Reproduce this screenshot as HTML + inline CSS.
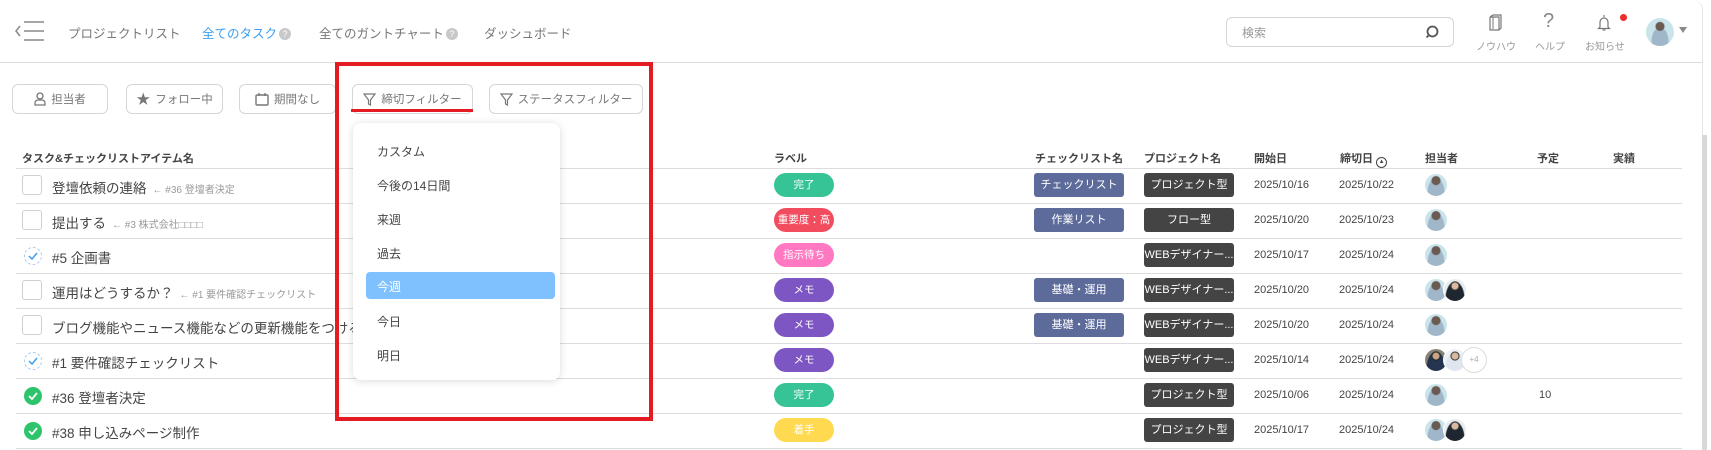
<!DOCTYPE html>
<html><head><meta charset="utf-8">
<style>
*{box-sizing:border-box;margin:0;padding:0}
body{width:1711px;height:450px;overflow:hidden;background:#fff;font-family:"Liberation Sans","Noto Sans CJK JP",sans-serif;color:#333;position:relative}
.a{position:absolute}
.panel{position:absolute;left:0;top:0;width:1703px;height:450px;border-right:1px solid #e4e4e4;border-top-right-radius:10px}
.nav{font-size:12.5px;color:#777;top:23px}
.q{display:inline-block;width:12px;height:12px;border-radius:50%;background:#c8c8c8;color:#fff;font-size:9px;text-align:center;line-height:12px;vertical-align:1px;margin-left:2px}
.btn{position:absolute;top:84px;height:30px;border:1px solid #d6d6d6;border-radius:6px;font-size:11.5px;color:#777;display:flex;align-items:center;justify-content:center;gap:5px}
.th{position:absolute;top:150px;font-size:11px;font-weight:bold;color:#444}
.line{position:absolute;left:16px;width:1666px;height:1px;background:#dcdcdc}
.cb{position:absolute;left:22px;width:20px;height:20px;border:1px solid #cfcfcf;border-radius:3px;background:#fff}
.dc{position:absolute;left:24px;width:18px;height:18px;border:1px dashed #a9cdf0;border-radius:50%}
.gc{position:absolute;left:24px;width:18px;height:18px;background:#2ec46c;border-radius:50%}
.t{position:absolute;left:52px;font-size:13.5px;color:#444;white-space:nowrap}
.t small{font-size:10px;color:#999;margin-left:6px}
.pill{position:absolute;left:774px;width:60px;height:24px;border-radius:12px;color:#fff;font-size:10.5px;text-align:center;line-height:24px}
.ck{position:absolute;left:1034px;width:90px;height:24px;border-radius:3px;background:#5d6b9b;color:#fff;font-size:11px;text-align:center;line-height:24px}
.pj{position:absolute;left:1144px;width:90px;height:24px;border-radius:3px;background:#444;color:#fff;font-size:11px;text-align:center;line-height:24px;white-space:nowrap;overflow:hidden}
.d{position:absolute;font-size:11px;color:#444}
.av{position:absolute;width:24px;height:24px;border-radius:50%;background:radial-gradient(circle at 50% 30%,#6b5a52 0 4px,transparent 5px),radial-gradient(ellipse at 50% 85%,#9fb7c8 0 8px,transparent 9px),#c9e4ea;border:1px solid #fff}
.av2{background:radial-gradient(circle at 50% 32%,#d9b9a0 0 3px,#333 4px,transparent 5px),radial-gradient(ellipse at 50% 90%,#1f2630 0 9px,transparent 10px),#e8eef0}
.dd{position:absolute;left:353px;top:123px;width:207px;height:257px;background:#fff;border-radius:8px;box-shadow:0 1px 8px rgba(0,0,0,.15)}
.di{position:absolute;left:24px;font-size:12px;color:#444}
</style></head><body>
<div class="panel"></div>
<svg class="a" style="left:14px;top:20px" width="34" height="22" viewBox="0 0 34 22"><path d="M6 6 L2 11 L6 16" fill="none" stroke="#888" stroke-width="1.5"/><path d="M10 2H30M10 11H30M10 20H30" stroke="#888" stroke-width="1.6"/></svg>
<div class="a nav" style="left:68px">プロジェクトリスト</div>
<div class="a nav" style="left:202px;color:#3d9ef0">全てのタスク<span class="q">?</span></div>
<div class="a nav" style="left:319px">全てのガントチャート<span class="q">?</span></div>
<div class="a nav" style="left:484px">ダッシュボード</div>
<div class="a" style="left:0;top:62px;width:1702px;height:1px;background:#ddd"></div>
<div class="a" style="left:1226px;top:17px;width:228px;height:30px;border:1px solid #d6d6d6;border-radius:6px"></div>
<div class="a" style="left:1242px;top:24px;font-size:12px;color:#999">検索</div>
<svg class="a" style="left:1424px;top:24px" width="16" height="16" viewBox="0 0 16 16"><circle cx="8.5" cy="7.5" r="5" fill="none" stroke="#555" stroke-width="1.8"/><path d="M5 11 L2.5 13.5" stroke="#555" stroke-width="1.8"/></svg>
<svg class="a" style="left:1487px;top:14px" width="16" height="18" viewBox="0 0 16 18"><path d="M3 3V16H12V3H3M3 3L6 1H14V14L12 16" fill="none" stroke="#777" stroke-width="1.2"/><path d="M6 3V15" stroke="#777" stroke-width="1"/></svg>
<div class="a" style="left:1476px;top:38px;font-size:10px;color:#999">ノウハウ</div>
<div class="a" style="left:1543px;top:10px;font-size:20px;color:#888">?</div>
<div class="a" style="left:1535px;top:38px;font-size:10px;color:#999">ヘルプ</div>
<svg class="a" style="left:1596px;top:14px" width="16" height="18" viewBox="0 0 16 18"><path d="M8 1V3M4 13V8A4 4 0 0 1 12 8V13L13.5 14.5H2.5Z" fill="none" stroke="#777" stroke-width="1.2"/><path d="M6.5 16H9.5" stroke="#777" stroke-width="1.2"/></svg>
<div class="a" style="left:1620px;top:14px;width:7px;height:7px;border-radius:50%;background:#f02a2a"></div>
<div class="a" style="left:1585px;top:38px;font-size:10px;color:#999">お知らせ</div>
<div class="av" style="left:1645px;top:17px;width:30px;height:30px"></div>
<div class="a" style="left:1679px;top:27px;width:0;height:0;border-left:4px solid transparent;border-right:4px solid transparent;border-top:6px solid #888"></div>
<div class="btn" style="left:12px;width:96px"><svg width="12" height="14" viewBox="0 0 12 14"><circle cx="6" cy="4" r="3" fill="none" stroke="#777" stroke-width="1.3"/><path d="M1 13V11A3 3 0 0 1 4 8H8A3 3 0 0 1 11 11V13Z" fill="none" stroke="#777" stroke-width="1.3"/></svg>担当者</div>
<div class="btn" style="left:126px;width:97px"><span style="font-size:14px;color:#777">★</span>フォロー中</div>
<div class="btn" style="left:239px;width:97px"><svg width="14" height="14" viewBox="0 0 14 14"><rect x="1" y="3" width="12" height="10" rx="1" fill="none" stroke="#777" stroke-width="1.4"/><path d="M4 1V4M10 1V4" stroke="#777" stroke-width="1.4"/></svg>期間なし</div>
<div class="btn" style="left:352px;width:121px"><svg width="13" height="13" viewBox="0 0 13 13"><path d="M1 1H12L7.5 7V12L5.5 11V7Z" fill="none" stroke="#777" stroke-width="1.2"/></svg>締切フィルター</div>
<div class="btn" style="left:489px;width:154px"><svg width="13" height="13" viewBox="0 0 13 13"><path d="M1 1H12L7.5 7V12L5.5 11V7Z" fill="none" stroke="#777" stroke-width="1.2"/></svg>ステータスフィルター</div>
<div class="a" style="left:351px;top:109px;width:122px;height:3px;background:#e31c23"></div>
<div class="th" style="left:22px">タスク&amp;チェックリストアイテム名</div>
<div class="th" style="left:774px">ラベル</div>
<div class="th" style="left:1035px">チェックリスト名</div>
<div class="th" style="left:1144px">プロジェクト名</div>
<div class="th" style="left:1254px">開始日</div>
<div class="th" style="left:1340px">締切日 <span style="display:inline-block;width:11px;height:11px;border:1px solid #444;border-radius:50%;font-size:6px;text-align:center;line-height:9px;vertical-align:-1px">▲</span></div>
<div class="th" style="left:1425px">担当者</div>
<div class="th" style="left:1537px">予定</div>
<div class="th" style="left:1613px">実績</div>
<div class="line" style="top:168px"></div>
<div class="line" style="top:203px"></div>
<div class="line" style="top:238px"></div>
<div class="line" style="top:273px"></div>
<div class="line" style="top:308px"></div>
<div class="line" style="top:343px"></div>
<div class="line" style="top:378px"></div>
<div class="line" style="top:413px"></div>
<div class="line" style="top:448px"></div>
<div class="cb" style="top:175px"></div><div class="t" style="top:177px">登壇依頼の連絡<small>← #36 登壇者決定</small></div>
<div class="cb" style="top:210px"></div><div class="t" style="top:212px">提出する<small>← #3 株式会社□□□□</small></div>
<div class="dc" style="top:247px"><svg class="a" style="left:3px;top:4px" width="10" height="8"><path d="M1 4L4 7L9 1" fill="none" stroke="#3d9ef0" stroke-width="1.5"/></svg></div><div class="t" style="top:247px">#5 企画書</div>
<div class="cb" style="top:280px"></div><div class="t" style="top:282px">運用はどうするか？<small>← #1 要件確認チェックリスト</small></div>
<div class="cb" style="top:315px"></div><div class="t" style="top:317px">ブログ機能やニュース機能などの更新機能をつける</div>
<div class="dc" style="top:352px"><svg class="a" style="left:3px;top:4px" width="10" height="8"><path d="M1 4L4 7L9 1" fill="none" stroke="#3d9ef0" stroke-width="1.5"/></svg></div><div class="t" style="top:352px">#1 要件確認チェックリスト</div>
<div class="gc" style="top:387px"><svg class="a" style="left:4px;top:5px" width="10" height="8"><path d="M1 4L4 7L9 1" fill="none" stroke="#fff" stroke-width="1.8"/></svg></div><div class="t" style="top:387px">#36 登壇者決定</div>
<div class="gc" style="top:422px"><svg class="a" style="left:4px;top:5px" width="10" height="8"><path d="M1 4L4 7L9 1" fill="none" stroke="#fff" stroke-width="1.8"/></svg></div><div class="t" style="top:422px">#38 申し込みページ制作</div>
<div class="pill" style="top:173px;background:#36c396">完了</div>
<div class="pill" style="top:208px;background:#f24d5f">重要度：高</div>
<div class="pill" style="top:243px;background:#ff78c1">指示待ち</div>
<div class="pill" style="top:278px;background:#7e56c3">メモ</div>
<div class="pill" style="top:313px;background:#7e56c3">メモ</div>
<div class="pill" style="top:348px;background:#7e56c3">メモ</div>
<div class="pill" style="top:383px;background:#36c396">完了</div>
<div class="pill" style="top:418px;background:#ffd94f">着手</div>
<div class="ck" style="top:173px">チェックリスト</div>
<div class="ck" style="top:208px">作業リスト</div>
<div class="ck" style="top:278px">基礎・運用</div>
<div class="ck" style="top:313px">基礎・運用</div>
<div class="pj" style="top:173px">プロジェクト型</div>
<div class="pj" style="top:208px">フロー型</div>
<div class="pj" style="top:243px">WEBデザイナー...</div>
<div class="pj" style="top:278px">WEBデザイナー...</div>
<div class="pj" style="top:313px">WEBデザイナー...</div>
<div class="pj" style="top:348px">WEBデザイナー...</div>
<div class="pj" style="top:383px">プロジェクト型</div>
<div class="pj" style="top:418px">プロジェクト型</div>
<div class="d" style="left:1254px;top:179px">2025/10/16</div><div class="d" style="left:1339px;top:179px">2025/10/22</div>
<div class="d" style="left:1254px;top:214px">2025/10/20</div><div class="d" style="left:1339px;top:214px">2025/10/23</div>
<div class="d" style="left:1254px;top:249px">2025/10/17</div><div class="d" style="left:1339px;top:249px">2025/10/24</div>
<div class="d" style="left:1254px;top:284px">2025/10/20</div><div class="d" style="left:1339px;top:284px">2025/10/24</div>
<div class="d" style="left:1254px;top:319px">2025/10/20</div><div class="d" style="left:1339px;top:319px">2025/10/24</div>
<div class="d" style="left:1254px;top:354px">2025/10/14</div><div class="d" style="left:1339px;top:354px">2025/10/24</div>
<div class="d" style="left:1254px;top:389px">2025/10/06</div><div class="d" style="left:1339px;top:389px">2025/10/24</div>
<div class="d" style="left:1254px;top:424px">2025/10/17</div><div class="d" style="left:1339px;top:424px">2025/10/24</div>
<div class="d" style="left:1539px;top:389px">10</div>
<div class="av" style="left:1424px;top:173px"></div>
<div class="av" style="left:1424px;top:208px"></div>
<div class="av" style="left:1424px;top:243px"></div>
<div class="av" style="left:1424px;top:278px"></div><div class="av av2" style="left:1443px;top:278px"></div>
<div class="av" style="left:1424px;top:313px"></div>
<div class="av av2" style="left:1424px;top:348px;background:radial-gradient(circle at 50% 32%,#c9a48a 0 3px,#222 4px,transparent 5px),radial-gradient(ellipse at 50% 90%,#25344f 0 9px,transparent 10px),#8a8478"></div>
<div class="av av2" style="left:1443px;top:348px;background:radial-gradient(circle at 50% 32%,#d9b9a0 0 3px,#333 4px,transparent 5px),radial-gradient(ellipse at 50% 90%,#dfe6ee 0 9px,transparent 10px),#eef2f4"></div>
<div class="a" style="left:1461px;top:347px;width:26px;height:26px;border-radius:50%;border:1px solid #ddd;background:#fff;font-size:8px;color:#aaa;text-align:center;line-height:24px">+4</div>
<div class="av" style="left:1424px;top:383px"></div>
<div class="av" style="left:1424px;top:418px"></div><div class="av av2" style="left:1443px;top:418px"></div>
<div class="a" style="left:1702px;top:135px;width:5px;height:315px;background:#d8d8d8"></div>
<div class="dd">
<div class="di" style="top:20px">カスタム</div>
<div class="di" style="top:54px">今後の14日間</div>
<div class="di" style="top:88px">来週</div>
<div class="di" style="top:122px">過去</div>
<div class="a" style="left:13px;top:149px;width:189px;height:27px;border-radius:4px;background:#7fc1ff"></div>
<div class="di" style="top:155px;color:#fff">今週</div>
<div class="di" style="top:190px">今日</div>
<div class="di" style="top:224px">明日</div>
</div>
<div class="a" style="left:335px;top:62px;width:318px;height:359px;border:4px solid #e31c23"></div>
</body></html>
